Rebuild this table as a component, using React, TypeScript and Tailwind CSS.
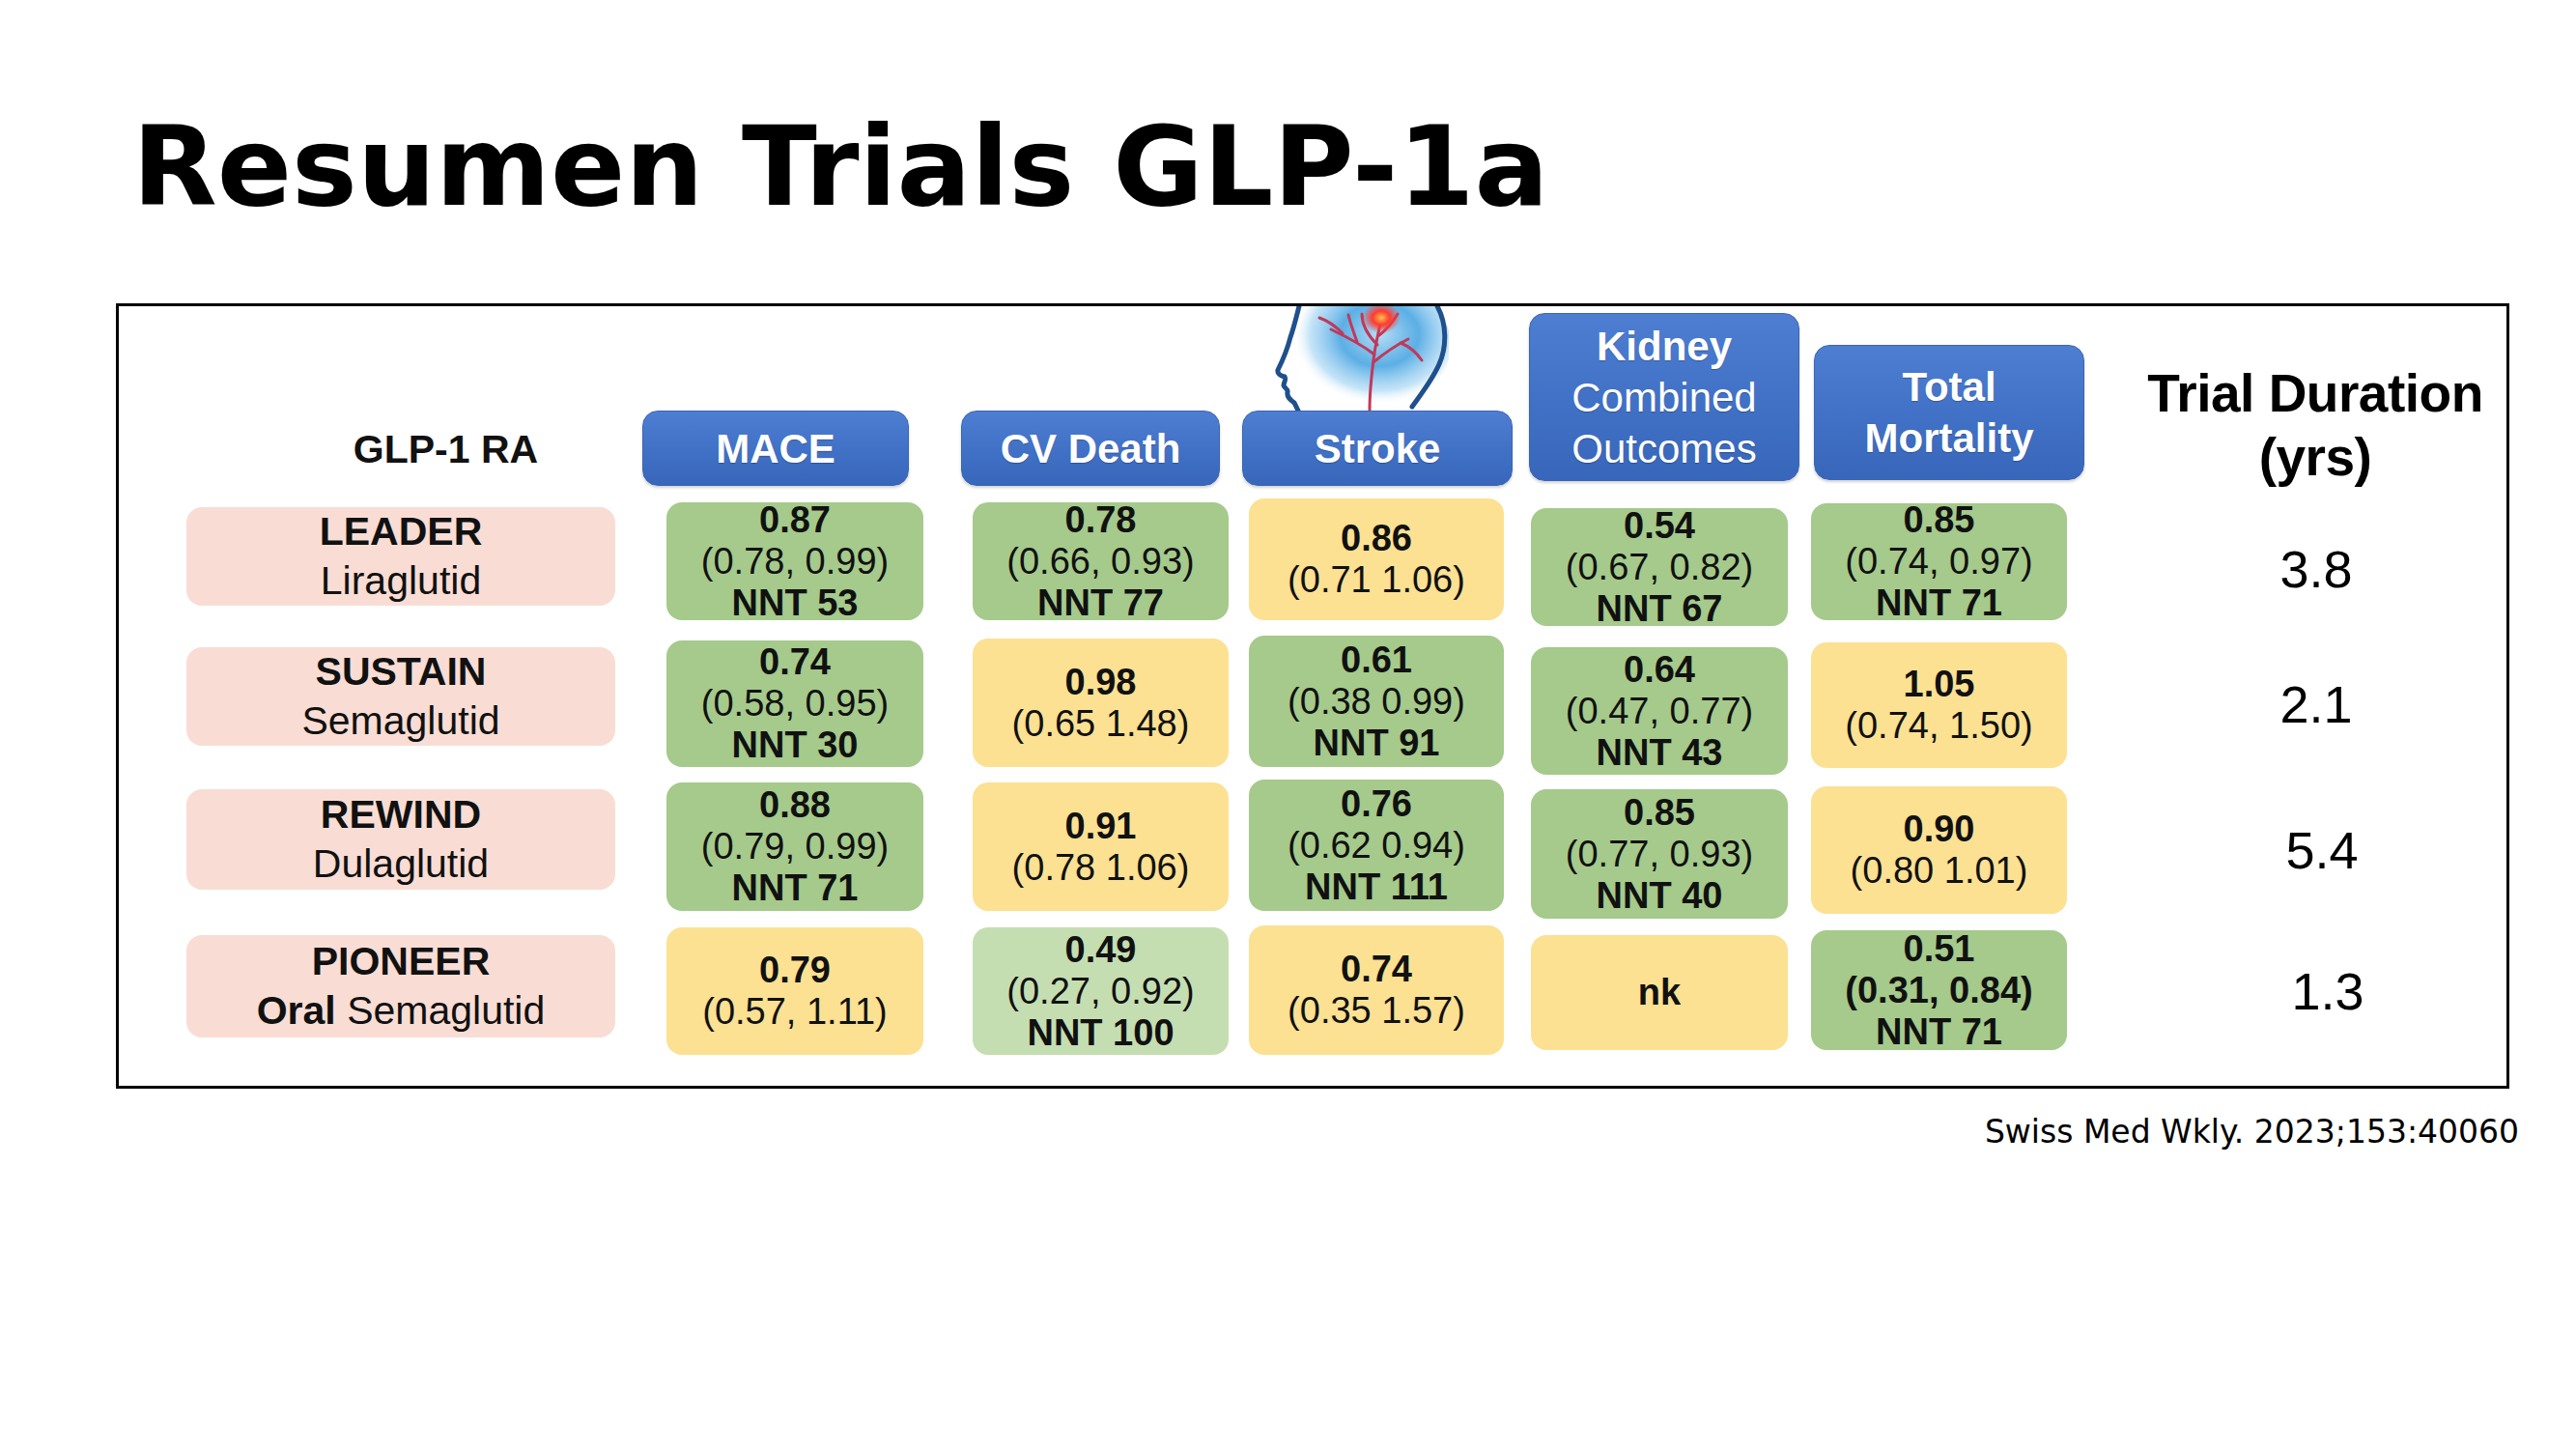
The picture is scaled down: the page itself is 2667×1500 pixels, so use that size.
import React from 'react';

type Line = { t: React.ReactNode; b?: boolean };
type Cell = { bg: string; box: string; lines: Line[] };

const GREEN = 'bg-[#a5ca8b]';
const YELLOW = 'bg-[#fce193]';
const LIGHT = 'bg-[#c5deb1]';

const rows: {
  row: string;
  label: [string, React.ReactNode];
  labelBox: string;
  dur: string;
  durBox: string;
  cells: Cell[];
}[] = [
  {
    row: 'h-[142px]',
    label: ['LEADER', 'Liraglutid'],
    labelBox: 'mt-[9px] h-[102px]',
    dur: '3.8',
    durBox: 'ml-[108px] mt-[43px]',
    cells: [
      { bg: GREEN, box: 'mt-[4px] h-[122px]', lines: [{ t: '0.87', b: true }, { t: '(0.78, 0.99)' }, { t: 'NNT 53', b: true }] },
      { bg: GREEN, box: 'mt-[4px] h-[122px]', lines: [{ t: '0.78', b: true }, { t: '(0.66, 0.93)' }, { t: 'NNT 77', b: true }] },
      { bg: YELLOW, box: 'mt-0 h-[126px]', lines: [{ t: '0.86', b: true }, { t: '(0.71 1.06)' }] },
      { bg: GREEN, box: 'mt-[10px] h-[122px]', lines: [{ t: '0.54', b: true }, { t: '(0.67, 0.82)' }, { t: 'NNT 67', b: true }] },
      { bg: GREEN, box: 'mt-[5px] h-[121px]', lines: [{ t: '0.85', b: true }, { t: '(0.74, 0.97)' }, { t: 'NNT 71', b: true }] },
    ],
  },
  {
    row: 'h-[149px]',
    label: ['SUSTAIN', 'Semaglutid'],
    labelBox: 'mt-[12px] h-[102px]',
    dur: '2.1',
    durBox: 'ml-[108px] mt-[41px]',
    cells: [
      { bg: GREEN, box: 'mt-[5px] h-[131px]', lines: [{ t: '0.74', b: true }, { t: '(0.58, 0.95)' }, { t: 'NNT 30', b: true }] },
      { bg: YELLOW, box: 'mt-[3px] h-[133px]', lines: [{ t: '0.98', b: true }, { t: '(0.65 1.48)' }] },
      { bg: GREEN, box: 'mt-0 h-[136px]', lines: [{ t: '0.61', b: true }, { t: '(0.38 0.99)' }, { t: 'NNT 91', b: true }] },
      { bg: GREEN, box: 'mt-[12px] h-[132px]', lines: [{ t: '0.64', b: true }, { t: '(0.47, 0.77)' }, { t: 'NNT 43', b: true }] },
      { bg: YELLOW, box: 'mt-[7px] h-[130px]', lines: [{ t: '1.05', b: true }, { t: '(0.74, 1.50)' }] },
    ],
  },
  {
    row: 'h-[151px]',
    label: ['REWIND', 'Dulaglutid'],
    labelBox: 'mt-[10px] h-[104px]',
    dur: '5.4',
    durBox: 'ml-[114px] mt-[43px]',
    cells: [
      { bg: GREEN, box: 'mt-[3px] h-[133px]', lines: [{ t: '0.88', b: true }, { t: '(0.79, 0.99)' }, { t: 'NNT 71', b: true }] },
      { bg: YELLOW, box: 'mt-[3px] h-[133px]', lines: [{ t: '0.91', b: true }, { t: '(0.78 1.06)' }] },
      { bg: GREEN, box: 'mt-0 h-[136px]', lines: [{ t: '0.76', b: true }, { t: '(0.62 0.94)' }, { t: 'NNT 111', b: true }] },
      { bg: GREEN, box: 'mt-[10px] h-[134px]', lines: [{ t: '0.85', b: true }, { t: '(0.77, 0.93)' }, { t: 'NNT 40', b: true }] },
      { bg: YELLOW, box: 'mt-[7px] h-[132px]', lines: [{ t: '0.90', b: true }, { t: '(0.80 1.01)' }] },
    ],
  },
  {
    row: 'h-[148px]',
    label: [
      'PIONEER',
      <>
        <span className="font-bold">Oral</span> Semaglutid
      </>,
    ],
    labelBox: 'mt-[10px] h-[106px]',
    dur: '1.3',
    durBox: 'ml-[120px] mt-[38px]',
    cells: [
      { bg: YELLOW, box: 'mt-[2px] h-[132px]', lines: [{ t: '0.79', b: true }, { t: '(0.57, 1.11)' }] },
      { bg: LIGHT, box: 'mt-[2px] h-[132px]', lines: [{ t: '0.49', b: true }, { t: '(0.27, 0.92)' }, { t: 'NNT 100', b: true }] },
      { bg: YELLOW, box: 'mt-0 h-[134px]', lines: [{ t: '0.74', b: true }, { t: '(0.35 1.57)' }] },
      { bg: YELLOW, box: 'mt-[10px] h-[119px]', lines: [{ t: 'nk', b: true }] },
      { bg: GREEN, box: 'mt-[5px] h-[124px]', lines: [{ t: '0.51', b: true }, { t: '(0.31, 0.84)', b: true }, { t: 'NNT 71', b: true }] },
    ],
  },
];

// cell column offsets (margin-left) and widths
const cellCols = [
  'ml-[53px] w-[266px]',
  'ml-[51px] w-[265px]',
  'ml-[21px] w-[264px]',
  'ml-[28px] w-[266px]',
  'ml-[24px] w-[265px]',
];

const blueHead =
  'shrink-0 rounded-[16px] bg-gradient-to-b from-[#4d7ed2] to-[#3766bb] border border-[#3a66b4] shadow-[0_2px_3px_rgba(0,0,0,0.18)] flex flex-col items-center justify-center text-white text-[42px] leading-[53px] [text-shadow:0_1px_1px_rgba(0,0,0,0.25)]';

function BrainIcon() {
  return (
    <svg width="190" height="108" viewBox="0 0 190 108" className="block">
      <defs>
        <radialGradient id="glow" cx="0.55" cy="0.42" r="0.55">
          <stop offset="0" stopColor="#b5def5" />
          <stop offset="0.45" stopColor="#4aa6e2" stopOpacity="0.9" />
          <stop offset="0.8" stopColor="#7cc2ee" stopOpacity="0.45" />
          <stop offset="1" stopColor="#ffffff" stopOpacity="0" />
        </radialGradient>
        <radialGradient id="hot" cx="0.5" cy="0.5" r="0.5">
          <stop offset="0" stopColor="#ffc04a" />
          <stop offset="0.45" stopColor="#ff3b30" />
          <stop offset="1" stopColor="#ff3b30" stopOpacity="0" />
        </radialGradient>
      </defs>
      <ellipse cx="110" cy="40" rx="82" ry="66" fill="url(#glow)" />
      <path
        d="M35 0 C32 12 29 24 26 32 C24 40 20 52 13 66 C12 70 16 72 20 73 C22 76 19 79 19 82 C20 85 24 86 23 89 C22 94 26 97 30 100 L34 108"
        fill="none"
        stroke="#1f4f8c"
        strokeWidth="5"
        strokeLinecap="round"
      />
      <path
        d="M178 0 C188 18 188 42 180 60 C173 76 162 90 152 104"
        fill="none"
        stroke="#1f4f8c"
        strokeWidth="5"
        strokeLinecap="round"
      />
      <g fill="none" stroke="#c0395a" strokeWidth="3" strokeLinecap="round">
        <path d="M108 108 C108 90 110 70 113 48 C115 36 118 24 120 12" />
        <path d="M113 50 C100 40 85 32 68 24" />
        <path d="M112 58 C124 48 136 40 148 34" />
        <path d="M95 37 C92 28 88 18 86 9" />
        <path d="M118 30 C126 24 132 16 137 8" />
        <path d="M80 28 C72 20 62 14 56 12" />
        <path d="M140 38 C150 42 158 50 162 56" />
        <path d="M116 40 C106 30 100 20 100 8" />
      </g>
      <ellipse cx="120" cy="12" rx="20" ry="16" fill="url(#hot)" />
    </svg>
  );
}

export default function App() {
  return (
    <div className="w-[2667px] h-[1500px] bg-white overflow-hidden font-['Liberation_Sans',Arial,sans-serif] text-[#111]">
      {/* Slide title */}
      <h1 className="pl-[137px] pt-[116px] text-[114px] leading-none font-bold text-black font-['DejaVu_Sans',sans-serif]">
        Resumen Trials GLP-1a
      </h1>

      {/* Embedded table picture */}
      <div className="ml-[120px] mt-[84px] w-[2478px] h-[813px] border-[3px] border-black bg-white overflow-hidden">
        {/* Header row */}
        <div className="flex items-start h-[199px]">
          <div className="shrink-0 ml-[190px] w-[297px] mt-[111px] h-[76px] flex items-center justify-center text-[41px] font-bold">
            GLP-1 RA
          </div>
          <div className={`ml-[55px] w-[276px] mt-[108px] h-[78px] font-bold ${blueHead}`}>MACE</div>
          <div className={`ml-[54px] w-[268px] mt-[108px] h-[78px] font-bold ${blueHead}`}>CV Death</div>
          <div className="shrink-0 ml-[23px] w-[280px] flex flex-col">
            <div className="ml-[24px] h-[108px]">
              <BrainIcon />
            </div>
            <div className={`h-[78px] font-bold ${blueHead}`}>Stroke</div>
          </div>
          <div className={`ml-[17px] w-[280px] mt-[7px] h-[174px] ${blueHead}`}>
            <span className="font-bold">Kidney</span>
            <span>Combined</span>
            <span>Outcomes</span>
          </div>
          <div className={`ml-[15px] w-[280px] mt-[40px] h-[140px] font-bold ${blueHead}`}>
            <span>Total</span>
            <span>Mortality</span>
          </div>
          <div className="shrink-0 ml-[59px] w-[360px] mt-[57px] flex flex-col items-center text-[55px] leading-[66px] font-bold tracking-[-0.5px] text-black whitespace-nowrap">
            <span>Trial Duration</span>
            <span>(yrs)</span>
          </div>
        </div>

        {/* Trial rows */}
        {rows.map((r) => (
          <div key={r.dur} className={`flex items-start ${r.row}`}>
            <div
              className={`shrink-0 ml-[70px] w-[444px] ${r.labelBox} rounded-[16px] bg-[#f9ddd4] flex flex-col items-center justify-center text-[41px] leading-[51px]`}
            >
              <span className="font-bold">{r.label[0]}</span>
              <span>{r.label[1]}</span>
            </div>
            {r.cells.map((c, i) => (
              <div
                key={i}
                className={`shrink-0 ${cellCols[i]} ${c.box} ${c.bg} rounded-[16px] flex flex-col items-center justify-center text-[38px] leading-[43px] whitespace-nowrap`}
              >
                {c.lines.map((l, j) => (
                  <span key={j} className={l.b ? 'font-bold' : ''}>
                    {l.t}
                  </span>
                ))}
              </div>
            ))}
            <div className={`shrink-0 w-[300px] ${r.durBox} h-[60px] flex items-center justify-center text-[54px] text-black`}>
              {r.dur}
            </div>
          </div>
        ))}
      </div>

      {/* Reference */}
      <p className="mt-[28px] pr-[59px] text-right text-[33px] leading-none text-black font-['DejaVu_Sans',sans-serif]">
        Swiss Med Wkly. 2023;153:40060
      </p>
    </div>
  );
}
